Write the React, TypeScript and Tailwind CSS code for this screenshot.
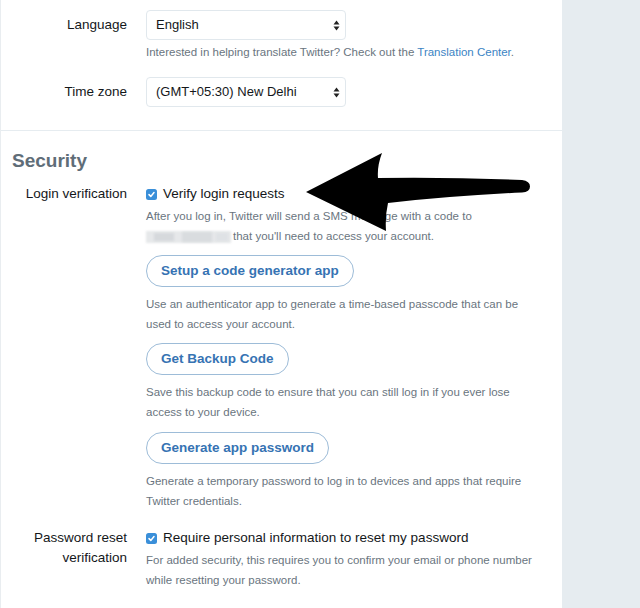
import React from "react";

function SelectBox({ value }: { value: string }) {
  return (
    <div className="flex h-[30px] w-[200px] items-center justify-between rounded-[4px] border border-[#e1e8ed] bg-white pl-[9px] pr-[5px] text-[13px] text-[#14171a]">
      <span>{value}</span>
      <svg width="7" height="11" viewBox="0 0 7 11">
        <path d="M3.5 0.5 L6.5 4.5 L0.5 4.5 Z" fill="#222" />
        <path d="M3.5 10.5 L6.5 6.5 L0.5 6.5 Z" fill="#222" />
      </svg>
    </div>
  );
}

function Check() {
  return (
    <span className="mr-[6px] inline-flex h-[11px] w-[11px] shrink-0 items-center justify-center rounded-[2.5px] bg-[#3a8fd9]">
      <svg width="9" height="9" viewBox="0 0 9 9">
        <path d="M2 4.6 L3.8 6.4 L7 2.6" stroke="white" strokeWidth="1.5" fill="none" strokeLinecap="round" strokeLinejoin="round" />
      </svg>
    </span>
  );
}

function PillButton({ children }: { children: React.ReactNode }) {
  return (
    <button className="flex h-[32px] items-center rounded-full border border-[#9dbcd8] bg-white px-[14px] text-[13.5px] font-bold text-[#3673b3]">
      {children}
    </button>
  );
}

function Help({ children, className = "" }: { children: React.ReactNode; className?: string }) {
  return <div className={`text-[11.5px] leading-[20px] text-[#6a7580] ${className}`}>{children}</div>;
}

function Arrow() {
  return (
    <svg className="pointer-events-none absolute left-0 top-0" width="640" height="608" viewBox="0 0 640 608">
      <path
        d="M306 192 L382 153 Q377 166 378 178 Q450 177 522 180 Q530 181 530 186.5 Q530 192 522 192.5 Q450 196 388 203 Q385 216 386 231 Z"
        fill="#000"
      />
    </svg>
  );
}

export default function App() {
  return (
    <div className="relative flex h-[608px] w-[640px] overflow-hidden bg-[#e6ecf0] font-['Liberation_Sans',Arial,sans-serif]">
      <div className="w-[562px] shrink-0 border-l border-[#e9edf0] bg-white">
        <div className="border-b border-[#e6ecf0] pt-[10px] pb-[23px]">
          <div className="grid grid-cols-[126px_1fr] gap-x-[19px]">
            <div className="flex h-[30px] items-center justify-end text-[13.5px] text-[#14171a]">Language</div>
            <div>
              <SelectBox value="English" />
              <Help className="mt-[2px]">
                Interested in helping translate Twitter? Check out the{" "}
                <span className="text-[#3b84c4]">Translation Center</span>.
              </Help>
            </div>
          </div>
          <div className="mt-[15px] grid grid-cols-[126px_1fr] gap-x-[19px]">
            <div className="flex h-[30px] items-center justify-end text-[13.5px] text-[#14171a]">Time zone</div>
            <SelectBox value="(GMT+05:30) New Delhi" />
          </div>
        </div>

        <div className="pt-[18px]">
          <div className="pl-[11px] text-[19px] font-bold leading-[24px] text-[#5f6d78]">Security</div>
          <div className="mt-[11px] grid grid-cols-[126px_1fr] gap-x-[19px]">
            <div className="text-right text-[13.5px] leading-[20px] text-[#14171a]">Login verification</div>
            <div>
              <div className="flex h-[20px] items-center text-[13.5px] text-[#14171a]">
                <Check />
                Verify login requests
              </div>
              <Help className="mt-[2px]">
                After you log in, Twitter will send a SMS message with a code to
                <br />
                <span className="relative mr-[2px] inline-block h-[12px] w-[85px] align-middle">
                  <span className="absolute inset-0 bg-[#e6e8ea] blur-[1px]" />
                  <span className="absolute left-[8px] top-[2px] h-[8px] w-[20px] bg-[#d6d9dc] blur-[1px]" />
                  <span className="absolute left-[36px] top-[1px] h-[10px] w-[30px] bg-[#d9dcdf] blur-[1px]" />
                  <span className="absolute left-[70px] top-[2px] h-[8px] w-[12px] bg-[#dfe2e5] blur-[1px]" />
                </span>
                that you'll need to access your account.
              </Help>
              <div className="mt-[9px] flex">
                <PillButton>Setup a code generator app</PillButton>
              </div>
              <Help className="mt-[7px]">
                Use an authenticator app to generate a time-based passcode that can be
                <br />
                used to access your account.
              </Help>
              <div className="mt-[9px] flex">
                <PillButton>Get Backup Code</PillButton>
              </div>
              <Help className="mt-[7px]">
                Save this backup code to ensure that you can still log in if you ever lose
                <br />
                access to your device.
              </Help>
              <div className="mt-[10px] flex">
                <PillButton>Generate app password</PillButton>
              </div>
              <Help className="mt-[7px]">
                Generate a temporary password to log in to devices and apps that require
                <br />
                Twitter credentials.
              </Help>
            </div>
          </div>

          <div className="mt-[17px] grid grid-cols-[126px_1fr] gap-x-[19px]">
            <div className="text-right text-[13.5px] leading-[20px] text-[#14171a]">
              Password reset
              <br />
              verification
            </div>
            <div>
              <div className="flex h-[20px] items-center text-[13.5px] text-[#14171a]">
                <Check />
                Require personal information to reset my password
              </div>
              <Help className="mt-[2px]">
                For added security, this requires you to confirm your email or phone number
                <br />
                while resetting your password.
              </Help>
            </div>
          </div>
        </div>
      </div>
      <div className="flex-1" />
      <Arrow />
    </div>
  );
}
